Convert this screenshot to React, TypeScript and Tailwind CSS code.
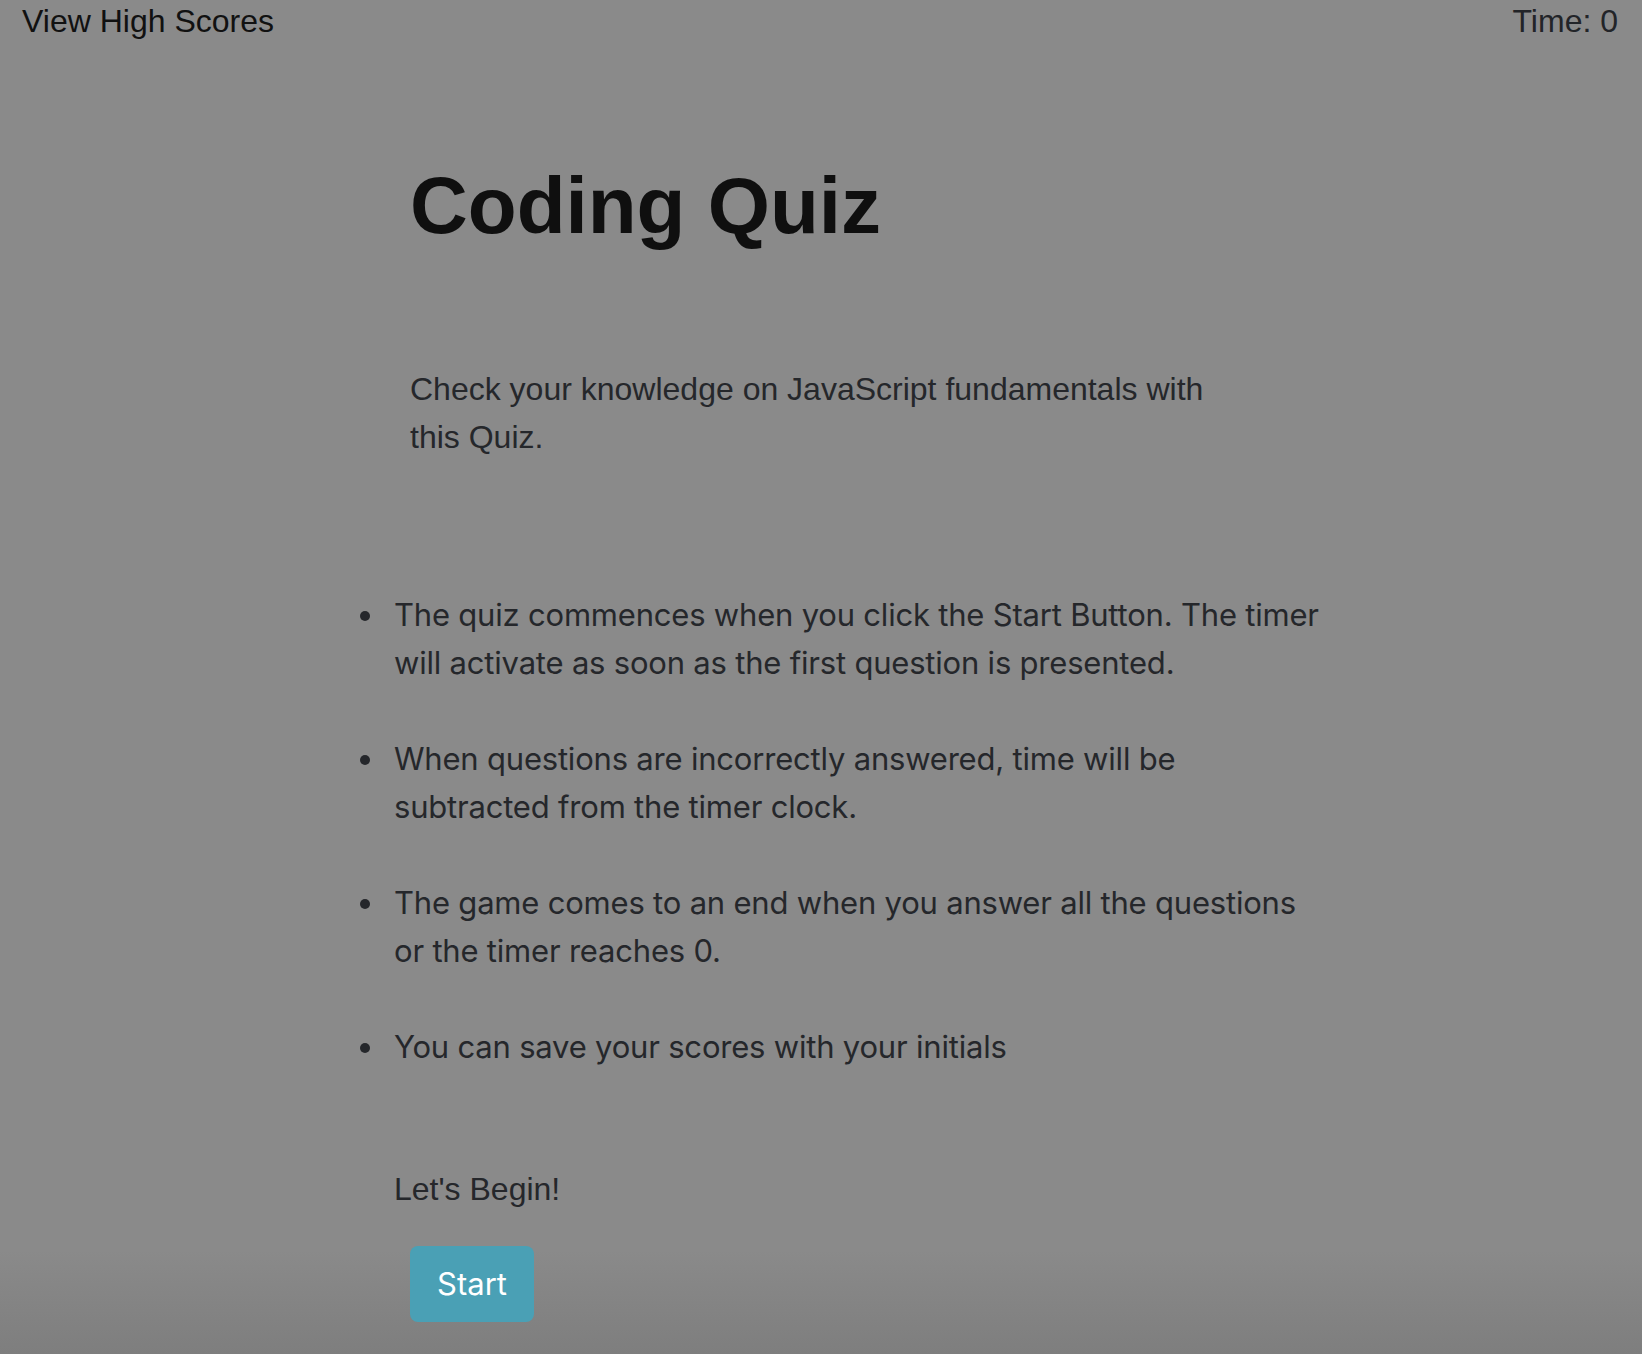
const rules = [
  "The quiz commences when you click the Start Button. The timer will activate as soon as the first question is presented.",
  "When questions are incorrectly answered, time will be subtracted from the timer clock.",
  "The game comes to an end when you answer all the questions or the timer reaches 0.",
  "You can save your scores with your initials",
];

const Header = () => (
  <header className="flex justify-between pt-[1px] pl-[22px] pr-[24px] text-[32px] leading-[40px] font-['Liberation_Sans',Arial,sans-serif]">
    <a href="#" className="text-[#111111]">
      View High Scores
    </a>
    <span className="text-[#222428]">Time: 0</span>
  </header>
);

export default function App() {
  return (
    <div className="min-h-[1354px] bg-[linear-gradient(to_bottom,#8a8a8a_0,#8a8a8a_1250px,#7e7e7e_1354px)]">
      <Header />
      <main className="ml-[410px] w-[822px] pt-[117px] font-['Liberation_Sans',Arial,sans-serif] text-[#25272b]">
        <h1 className="text-[80px] leading-[96px] font-bold text-[#0f0f0f]">Coding Quiz</h1>
        <p className="mt-[111px] text-[32px] leading-[48px]">
          Check your knowledge on JavaScript fundamentals with this Quiz.
        </p>
        <ul className="-ml-[50px] mt-[130px] w-[970px] font-['Inter',sans-serif] text-[31px] leading-[48px]">
          {rules.map((rule) => (
            <li key={rule} className="mb-[48px] flex items-start gap-[24px] last:mb-0">
              <span className="mt-[20px] h-[10px] w-[10px] shrink-0 rounded-full bg-[#25272b]" />
              <span className="w-[936px] tracking-[-0.2px]">{rule}</span>
            </li>
          ))}
        </ul>
        <p className="-ml-[16px] mt-[94px] text-[32px] leading-[48px]">Let's Begin!</p>
        <button className="mt-[33px] flex h-[76px] w-[124px] items-center justify-center rounded-[8px] bg-[#4aa0b5] font-['Inter',sans-serif] text-[31px] leading-[48px] text-white">
          Start
        </button>
      </main>
    </div>
  );
}
